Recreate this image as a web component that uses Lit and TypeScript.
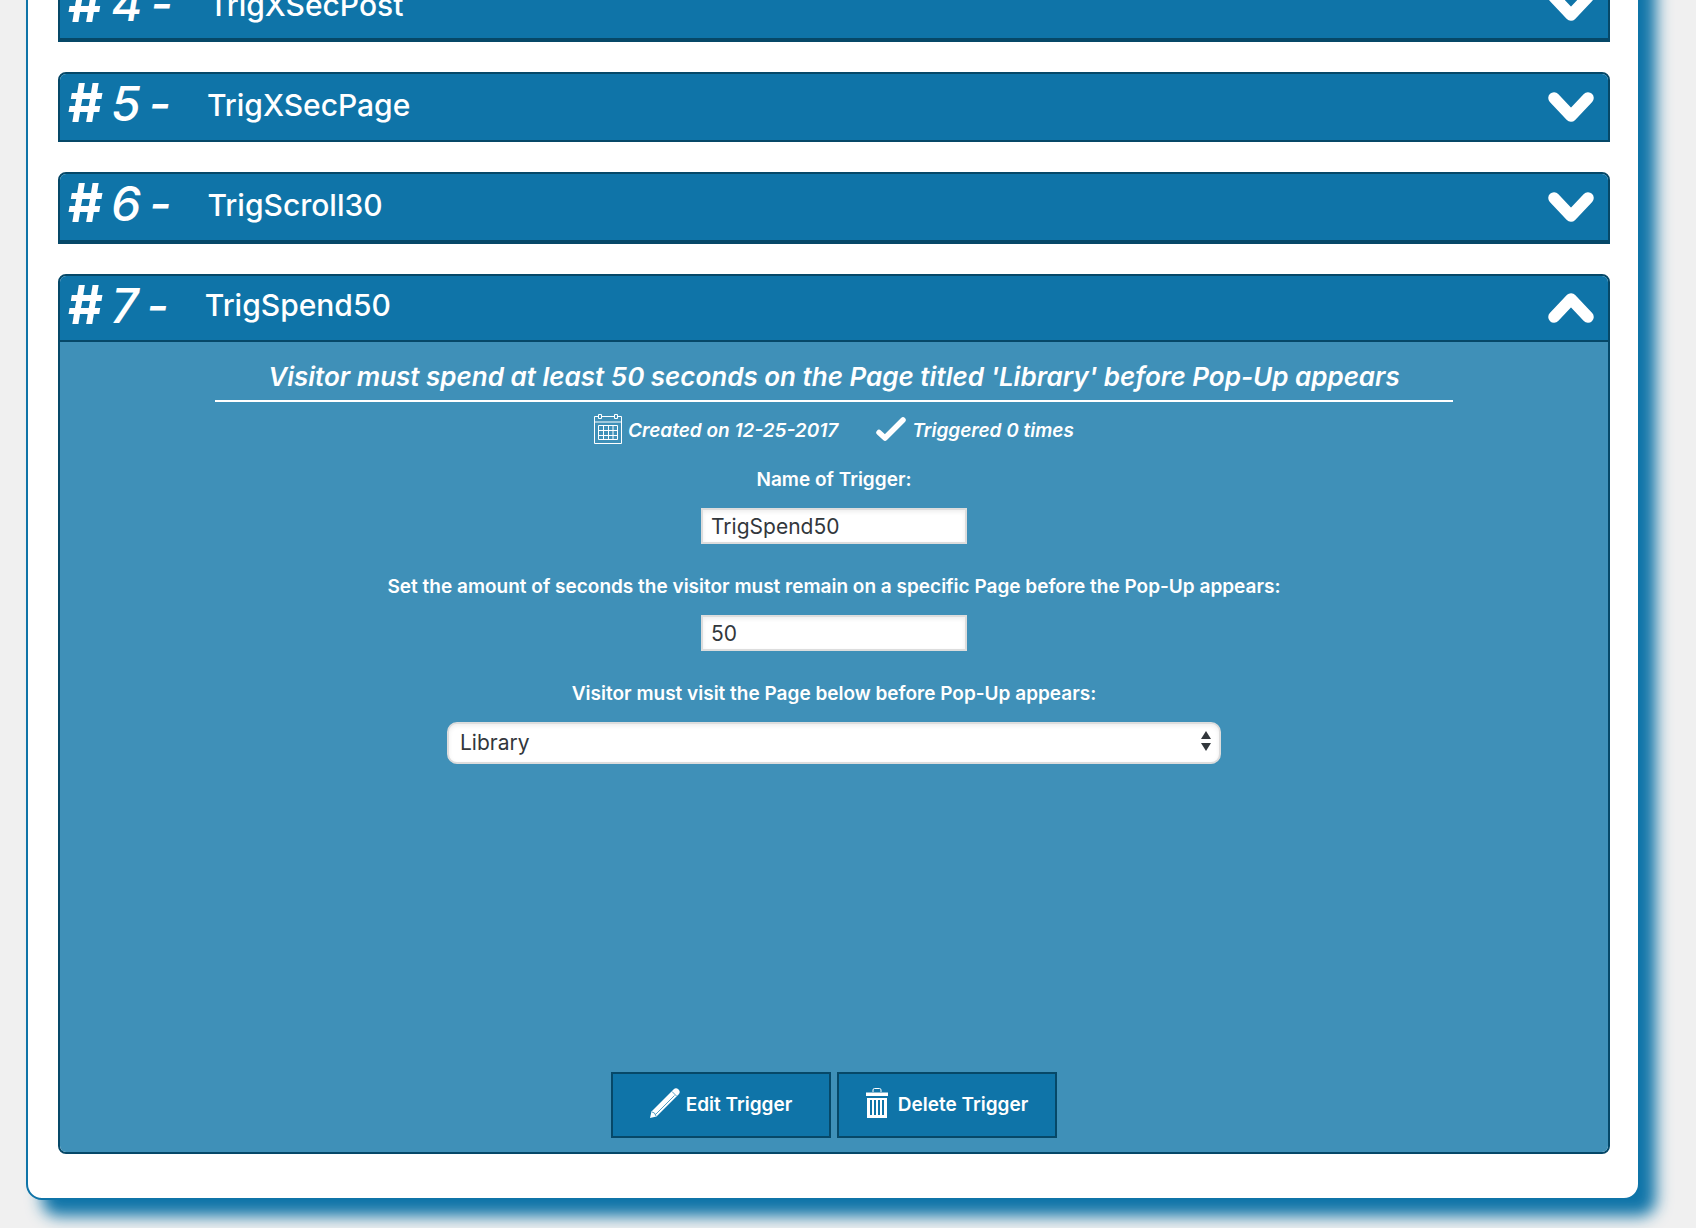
import { LitElement, html, css, nothing } from "lit";
import { customElement, property, state } from "lit/decorators.js";
import { classMap } from "lit/directives/class-map.js";

const chevron = html`<svg class="chevron" width="46" height="30" viewBox="0 0 46 30" aria-hidden="true">
  <path d="M6 6 23 24 40 6" fill="none" stroke="#fff" stroke-width="11.500" stroke-linecap="round" stroke-linejoin="round" />
</svg>`;

const calendarIcon = html`<svg width="28" height="30" viewBox="0 0 28 30" aria-hidden="true">
  <path d="M4 2.500H.5v27h27v-27H24M8 2.500h12" fill="none" stroke="#fff" />
  <path d="M4.500.5h3v4h-3zM20.500.5h3v4h-3z" fill="none" stroke="#fff" />
  <path d="M1 7h26v2H1z" fill="#fff" opacity=".5" />
  <path d="M4.500 11.500h19v14h-19zM9.500 11v15M14.500 11v15M19 11v15M4 16.500h20M4 21.500h20" fill="none" stroke="#fff" />
</svg>`;

const checkIcon = html`<svg width="30" height="24" viewBox="0 0 30 24" aria-hidden="true">
  <path d="M3 15.500 9 21 27 3" fill="none" stroke="#fff" stroke-width="5.500" stroke-linecap="round" stroke-linejoin="round" />
</svg>`;

const pencilIcon = html`<svg width="30" height="30" viewBox="0 0 30 30" aria-hidden="true">
  <path d="M0 30 1.500 23.500 23.500 1.500Q26-1 28.500 1.500T28.500 6.500L6.500 28.500z" fill="#fff" />
  <path d="M2 24q3 0 4 4M22 3.500 26.500 8M5.500 26.500 24.500 7.500" fill="none" stroke="#0f74a8" stroke-width=".7" />
</svg>`;

const trashIcon = html`<svg width="22" height="30" viewBox="0 0 22 30" aria-hidden="true">
  <path d="M7 4V2q0-1.500 1.500-1.500h5Q15 .5 15 2v2" fill="none" stroke="#fff" />
  <path d="M0 4.500h22V8H0z" fill="#fff" />
  <path fill-rule="evenodd" d="M1 10h20v20H1zM4 12v15h2V12zM8 12v15h2V12zM12 12v15h2V12zM16 12v15h2V12z" fill="#fff" />
</svg>`;

interface Trigger {
  id: number;
  name: string;
}

const triggers: Trigger[] = [
  { id: 4, name: "TrigXSecPost" },
  { id: 5, name: "TrigXSecPage" },
  { id: 6, name: "TrigScroll30" },
  { id: 7, name: "TrigSpend50" },
];

@customElement("trigger-form")
class TriggerForm extends LitElement {
  static styles = css`
    :host {
      display: flex;
      flex-direction: column;
      align-items: center;
      min-height: 810px;
      box-sizing: border-box;
      padding: 14px 0;
      background: #3f90b8;
      color: #fff;
      font-size: 19px;
      font-weight: 600;
      line-height: 24px;
    }
    .summary {
      width: 80%;
      box-sizing: border-box;
      margin: 0;
      padding-bottom: 2px;
      border-bottom: 2px solid #fff;
      font-size: 26px;
      font-weight: 600;
      font-style: italic;
      line-height: 42px;
      text-align: center;
    }
    .meta {
      display: flex;
      gap: 38px;
      margin: 12px 0 24px;
      font-style: italic;
    }
    .fact {
      display: flex;
      align-items: center;
      gap: 6px;
      height: 30px;
    }
    .fact span {
      padding-top: 4px;
    }
    .field {
      display: flex;
      flex-direction: column;
      align-items: center;
      gap: 16px;
      width: 100%;
      margin-bottom: 31px;
    }
    .field input,
    .field select {
      box-sizing: border-box;
      border: 2px solid #ddd;
      background: #fff;
      box-shadow: inset 0 2px 4px rgba(0, 0, 0, 0.07);
      color: #32373c;
      font: inherit;
      font-size: 21px;
      font-weight: 400;
    }
    .field input {
      width: 266px;
      height: 36px;
      padding: 0 8px;
    }
    .picker {
      display: grid;
      align-items: center;
      width: 50%;
    }
    .picker select {
      grid-area: 1 / 1;
      width: 100%;
      height: 42px;
      padding: 0 11px;
      border-radius: 10px;
      appearance: none;
    }
    .picker svg {
      grid-area: 1 / 1;
      justify-self: end;
      margin: 0 10px 4px 0;
      pointer-events: none;
    }
    .actions {
      display: flex;
      gap: 6px;
      margin-top: auto;
    }
    .actions button {
      display: flex;
      align-items: center;
      justify-content: center;
      gap: 6px;
      width: 220px;
      height: 66px;
      padding: 0 0 4px;
      border: 2px solid #064868;
      background: #0f74a8;
      color: #fff;
      font: inherit;
      cursor: pointer;
    }
    .actions .remove {
      gap: 10px;
    }
    .actions span {
      padding-top: 4px;
    }
  `;

  render() {
    return html`
      <p class="summary">Visitor must spend at least 50 seconds on the Page titled 'Library' before Pop-Up appears</p>
      <div class="meta">
        <div class="fact">${calendarIcon}<span>Created on 12-25-2017</span></div>
        <div class="fact">${checkIcon}<span>Triggered 0 times</span></div>
      </div>
      <div class="field">
        <label for="name">Name of Trigger:</label>
        <input id="name" type="text" .value=${"TrigSpend50"} />
      </div>
      <div class="field">
        <label for="seconds">Set the amount of seconds the visitor must remain on a specific Page before the Pop-Up appears:</label>
        <input id="seconds" type="text" inputmode="numeric" .value=${"50"} />
      </div>
      <div class="field">
        <label for="page">Visitor must visit the Page below before Pop-Up appears:</label>
        <div class="picker">
          <select id="page">
            <option>Library</option>
          </select>
          <svg width="10" height="20" viewBox="0 0 10 20" aria-hidden="true">
            <path d="M5 0l5 8H0zM5 20l5-8H0z" fill="#32373c" />
          </svg>
        </div>
      </div>
      <div class="actions">
        <button type="button">${pencilIcon}<span>Edit Trigger</span></button>
        <button type="button" class="remove">${trashIcon}<span>Delete Trigger</span></button>
      </div>
    `;
  }
}

@customElement("trigger-item")
class TriggerItem extends LitElement {
  static styles = css`
    :host {
      display: block;
    }
    .box {
      overflow: hidden;
      border: 2px solid #064868;
      border-radius: 8px 8px 0 0;
    }
    .box.heavy {
      border-bottom-width: 4px;
    }
    .box.open {
      border-radius: 8px;
    }
    .header {
      display: flex;
      align-items: flex-start;
      box-sizing: border-box;
      width: 100%;
      height: 66px;
      padding: 0 14px 0 8px;
      border: 0;
      background: #0f74a8;
      color: #fff;
      font: inherit;
      text-align: left;
      cursor: pointer;
    }
    :host(:first-child) .header {
      height: 64px;
    }
    .number {
      display: flex;
      gap: 8px;
      margin-right: 36px;
      font-size: 48px;
      font-style: italic;
      font-weight: 500;
      line-height: 60px;
      font-variant-ligatures: no-contextual;
    }
    .hash {
      font-size: 54px;
      font-style: normal;
      font-weight: 700;
      line-height: 58px;
    }
    .title {
      flex: 1;
      font-size: 30px;
      font-weight: 500;
      line-height: 62px;
    }
    .chevron {
      align-self: center;
    }
    .open .header {
      border-bottom: 2px solid #064868;
    }
    .open .title {
      line-height: 58px;
    }
    .open .chevron {
      transform: rotate(180deg);
    }
  `;

  @property({ type: Number }) number = 0;
  @property() name = "";
  @property({ type: Boolean }) open = false;

  private toggle() {
    this.dispatchEvent(new CustomEvent("toggle-item"));
  }

  render() {
    const classes = { box: true, open: this.open, heavy: !this.open && this.number % 2 === 0 };
    return html`
      <div class=${classMap(classes)}>
        <button class="header" type="button" aria-expanded=${this.open} @click=${this.toggle}>
          <span class="number"><span class="hash">#</span><span>${this.number}</span><span>-</span></span>
          <span class="title">${this.name}</span>
          ${chevron}
        </button>
        ${this.open ? html`<trigger-form></trigger-form>` : nothing}
      </div>
    `;
  }
}

@customElement("app-root")
class AppRoot extends LitElement {
  static styles = css`
    :host {
      display: block;
      box-sizing: border-box;
      min-height: 100vh;
      overflow: hidden;
      padding: 0 56px 28px 26px;
      background: #f0f0f0;
      font-family: Inter, "Liberation Sans", sans-serif;
    }
    .card {
      display: flex;
      flex-direction: column;
      gap: 30px;
      margin-top: -60px;
      padding: 30px 28px 44px 30px;
      border: 2px solid #0f74a8;
      border-radius: 16px;
      background: #fff;
      box-shadow: 16px 16px 16px #0f74a8;
    }
  `;

  @state() private openId = 7;

  private toggle(id: number) {
    this.openId = this.openId === id ? 0 : id;
  }

  render() {
    return html`
      <main class="card">
        ${triggers.map(
          (t) => html`<trigger-item
            .number=${t.id}
            .name=${t.name}
            .open=${this.openId === t.id}
            @toggle-item=${() => this.toggle(t.id)}
          ></trigger-item>`
        )}
      </main>
    `;
  }
}
